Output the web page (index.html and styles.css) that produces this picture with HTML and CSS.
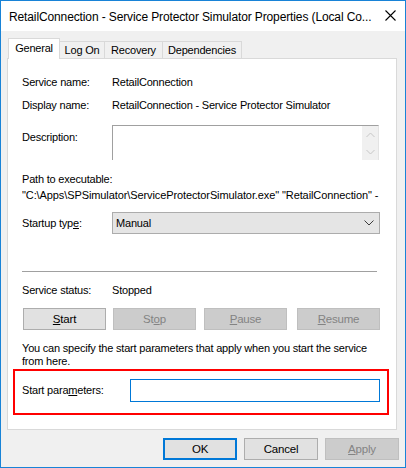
FILE: index.html
```html
<!DOCTYPE html>
<html>
<head>
<meta charset="utf-8">
<link rel="stylesheet" href="styles.css">
</head>
<body>
<div class="window">
  <div class="titlebar">
    <span class="title">RetailConnection - Service Protector Simulator Properties (Local Co...</span>
    <svg class="close" width="11" height="11" viewBox="0 0 11 11"><path d="M0.5 0.5 L10.5 10.5 M10.5 0.5 L0.5 10.5" stroke="#000" stroke-width="1.1" fill="none"/></svg>
  </div>
  <div class="client">
    <div class="tabs">
      <div class="tab active t-general">General</div>
      <div class="tab t-logon">Log On</div>
      <div class="tab t-recovery">Recovery</div>
      <div class="tab t-deps">Dependencies</div>
    </div>
    <div class="panel">
      <div class="row r-name"><span class="lbl">Service name:</span><span class="val">RetailConnection</span></div>
      <div class="row r-display"><span class="lbl">Display name:</span><span class="val">RetailConnection - Service Protector Simulator</span></div>
      <div class="row r-desc">
        <span class="lbl">Description:</span>
        <div class="descbox">
          <div class="scroll">
            <svg width="9" height="6" viewBox="0 0 9 6"><path d="M0.5 5 L4.5 1 L8.5 5" stroke="#c6c6c6" stroke-width="1" fill="none"/></svg>
            <svg width="9" height="6" viewBox="0 0 9 6"><path d="M0.5 1 L4.5 5 L8.5 1" stroke="#c6c6c6" stroke-width="1" fill="none"/></svg>
          </div>
        </div>
      </div>
      <div class="path-lbl">Path to executable:</div>
      <div class="path-val">"C:\Apps\SPSimulator\ServiceProtectorSimulator.exe" "RetailConnection" -</div>
      <div class="row r-startup">
        <span class="lbl">Startup typ<u>e</u>:</span>
        <div class="select"><span>Manual</span>
          <svg width="10" height="6" viewBox="0 0 10 6"><path d="M0.5 0.5 L5 5 L9.5 0.5" stroke="#3c3c3c" stroke-width="1" fill="none"/></svg>
        </div>
      </div>
      <div class="sep"></div>
      <div class="row r-status"><span class="lbl">Service status:</span><span class="val">Stopped</span></div>
      <div class="btnrow">
        <div class="btn"><u>S</u>tart</div>
        <div class="btn disabled">St<u>o</u>p</div>
        <div class="btn disabled"><u>P</u>ause</div>
        <div class="btn disabled"><u>R</u>esume</div>
      </div>
      <p class="hint">You can specify the start parameters that apply when you start the service from here.</p>
      <div class="redbox">
        <span class="lbl">Start para<u>m</u>eters:</span>
        <div class="input"></div>
      </div>
    </div>
    <div class="footer">
      <div class="btn fbtn default">OK</div>
      <div class="btn fbtn">Cancel</div>
      <div class="btn fbtn disabled"><u>A</u>pply</div>
    </div>
  </div>
</div>
</body>
</html>
```

FILE: styles.css
```css
* { box-sizing: border-box; }
html, body { margin: 0; padding: 0; }
body {
  font-family: "Liberation Sans", Arial, sans-serif;
  font-size: 11px;
  letter-spacing: -0.2px;
  color: #000;
  background: #fff;
}
.window {
  width: 406px;
  height: 468px;
  border: 1px solid #1883d7;
  background: #f0f0f0;
  display: flex;
  flex-direction: column;
  overflow: hidden;
}
.titlebar {
  height: 30px;
  background: #fff;
  display: flex;
  align-items: center;
  padding-left: 8px;
  flex-shrink: 0;
}
.title {
  flex: 1;
  white-space: nowrap;
  overflow: hidden;
  line-height: 16px;
  padding-top: 1px;
  font-size: 12px;
  letter-spacing: -0.12px;
}
.close { margin: 0 9px 1px 10px; flex-shrink: 0; }
.client { flex: 1; display: flex; flex-direction: column; }
.tabs {
  display: flex;
  align-items: flex-end;
  padding-left: 7px;
  margin-top: 7px;
  height: 20px;
}
.tab {
  border: 1px solid #d9d9d9;
  border-bottom: none;
  background: #f0f0f0;
  height: 17px;
  line-height: 17px;
  text-align: center;
  margin-left: -1px;
}
.tab.active {
  background: #fff;
  height: 21px;
  margin-bottom: -1px;
  position: relative;
  z-index: 1;
  margin-left: 0;
  line-height: 18px;
}
.t-general { width: 52px; }
.t-logon { width: 46px; }
.t-recovery { width: 59px; }
.t-deps { width: 80px; }
.panel {
  margin-left: 6px;
  width: 390px;
  height: 372px;
  background: #fff;
  border: 1px solid #d9d9d9;
  padding-top: 16px;
  display: flex;
  flex-direction: column;
}
.row { display: flex; padding-left: 14px; line-height: 14px; }
.lbl { width: 90px; flex-shrink: 0; white-space: nowrap; }
.val { white-space: nowrap; }
.r-display { margin-top: 9px; }
.r-desc { margin-top: 13px; height: 35px; }
.r-desc .lbl { padding-top: 5px; }
.descbox {
  width: 267px;
  height: 35px;
  border-top: 1px solid #a0a0a0;
  border-left: 1px solid #a0a0a0;
  border-right: 1px solid #e3e3e3;
  display: flex;
  justify-content: flex-end;
}
.scroll {
  width: 16px;
  background: #f0f0f0;
  display: flex;
  flex-direction: column;
  align-items: center;
  justify-content: space-between;
  padding: 6px 0 5px;
}
.scroll svg { display: block; }
.path-lbl { margin-top: 11px; padding-left: 14px; line-height: 16px; }
.path-val {
  padding-left: 14px;
  line-height: 16px;
  white-space: nowrap;
  letter-spacing: -0.1px;
}
.r-startup { margin-top: 9px; line-height: 22px; }
.select {
  width: 268px;
  height: 22px;
  background: #e5e5e5;
  border: 1px solid #acacac;
  display: flex;
  align-items: center;
  justify-content: space-between;
  padding: 0 5px 0 3px;
  line-height: 18px;
}
.sep {
  margin: 37px 0 0 14px;
  width: 355px;
  height: 1px;
  background: #a0a0a0;
}
.r-status { margin-top: 11px; }
.btnrow {
  display: flex;
  gap: 8px;
  padding-left: 15px;
  margin-top: 11px;
}
.btn {
  height: 22px;
  width: 83px;
  background: #e1e1e1;
  border: 1px solid #adadad;
  text-align: center;
  line-height: 20px;
  font-size: 11.5px;
}
.btnrow .btn:nth-child(2) { margin-left: -1px; }
.btnrow .btn:nth-child(4) { margin-left: 2px; }
.btn.disabled {
  background: #cccccc;
  border-color: #bfbfbf;
  color: #838383;
}
.hint {
  margin: 12px 0 0 14px;
  line-height: 13px;
  width: 362px;
}
.redbox {
  margin: 1px 0 0 5px;
  width: 376px;
  height: 46px;
  border: 2px solid #ff0000;
  display: flex;
  padding: 8px 0 0 7px;
}
.redbox .lbl { width: 108px; line-height: 23px; }
.input {
  width: 250px;
  height: 23px;
  border: 1px solid #0078d7;
  background: #fff;
}
.footer {
  display: flex;
  justify-content: flex-end;
  gap: 7px;
  padding-right: 6px;
  margin-top: 8px;
}
.fbtn { width: 74px; }
.fbtn.default { border: 2px solid #0078d7; line-height: 18px; }
```
